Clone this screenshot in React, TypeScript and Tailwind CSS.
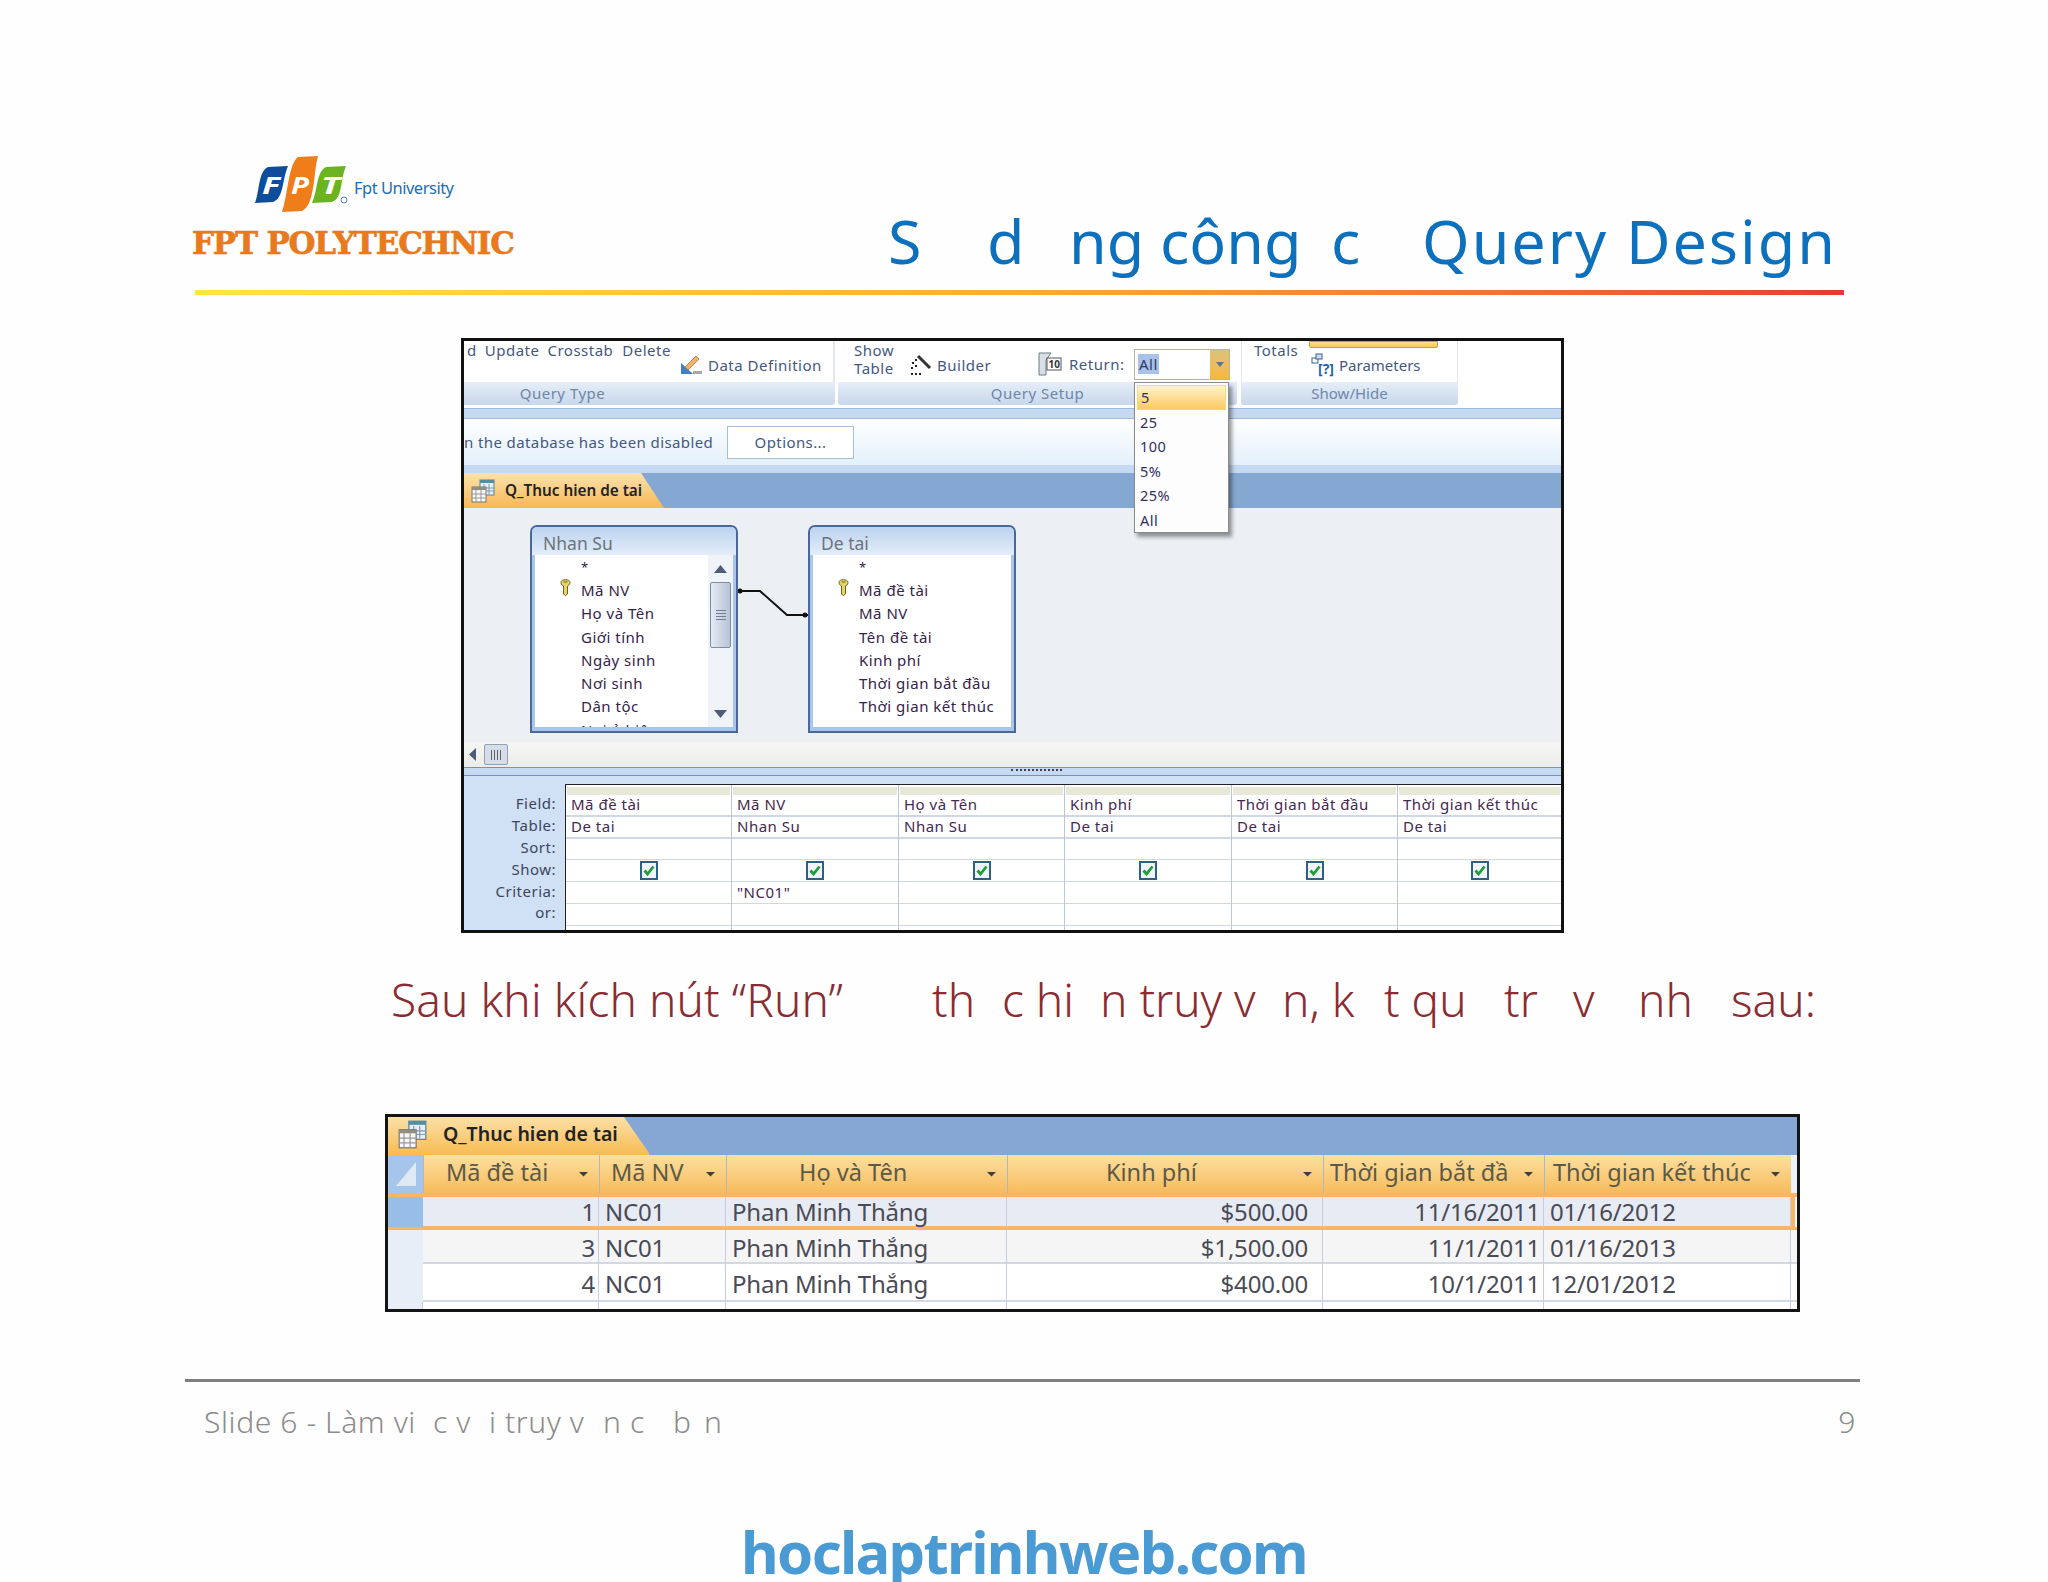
const designCols = [
  { field: "Mã đề tài", table: "De tai", criteria: "" },
  { field: "Mã NV", table: "Nhan Su", criteria: '"NC01"' },
  { field: "Họ và Tên", table: "Nhan Su", criteria: "" },
  { field: "Kinh phí", table: "De tai", criteria: "" },
  { field: "Thời gian bắt đầu", table: "De tai", criteria: "" },
  { field: "Thời gian kết thúc", table: "De tai", criteria: "" },
];

const resultHeads = [
  { label: "Mã đề tài", cls: "pl-[22px]" },
  { label: "Mã NV", cls: "pl-[11px]" },
  { label: "Họ và Tên", cls: "pl-[72px]" },
  { label: "Kinh phí", cls: "pl-[98px]" },
  { label: "Thời gian bắt đầ", cls: "pl-[6px]" },
  { label: "Thời gian kết thúc", cls: "pl-[8px]" },
];

const resultRows = [
  { id: 1, cost: "$500.00", start: "11/16/2011", end: "01/16/2012", bg: "bg-[#e7ebf3]", sel: "bg-[#97bee6]", h: "h-[37px]", lead: "leading-[30px]" },
  { id: 3, cost: "$1,500.00", start: "11/1/2011", end: "01/16/2013", bg: "bg-[#f5f5f5]", sel: "bg-[#e7eef7]", h: "h-[34px]", lead: "leading-[35px]" },
  { id: 4, cost: "$400.00", start: "10/1/2011", end: "12/01/2012", bg: "bg-white", sel: "bg-[#e7eef7]", h: "h-[38px]", lead: "leading-[39px]" },
];

const resultCols = "grid grid-cols-[35px_176px_127px_281px_316px_221px_247px_6px]";

function TabIcon({ size }: { size: number }) {
  return (
    <svg width={size} height={size} viewBox="0 0 24 24">
      <rect x="9" y="1" width="14" height="15" fill="#e8eef6" stroke="#5d7f9f" />
      <rect x="9" y="1" width="14" height="3" fill="#4f8f9f" />
      <path d="M13 5v10M18 5v10M9 9h14M9 12h14" stroke="#7f9ab5" strokeWidth="1" />
      <rect x="1" y="8" width="14" height="15" fill="#f7f7f7" stroke="#777" />
      <rect x="1" y="8" width="14" height="3" fill="#8f8f7f" />
      <path d="M5 11v12M10 11v12M1 15h14M1 19h14" stroke="#999" strokeWidth="1" />
    </svg>
  );
}

function KeyIcon() {
  return (
    <svg width="11" height="17" viewBox="0 0 11 17">
      <path d="M1 3.500C1 1.500 3 .7 5.500.7S10 1.500 10 3.500 8.500 6.500 7.500 7v8l-2 1.500L3.500 15V7C2.500 6.500 1 5.500 1 3.500Z" fill="#e4d46a" stroke="#6f6420" strokeWidth="1" />
      <path d="M3.500 3h4" stroke="#6f6420" strokeWidth="1" />
    </svg>
  );
}

function FilterArrow() {
  return (
    <svg width="11" height="6" viewBox="0 0 11 6" className="shrink-0">
      <path d="M1 1h9L5.500 5.500Z" fill="#3f3f3f" />
    </svg>
  );
}

function ShowCheck() {
  return (
    <span className="flex h-[19px] w-[18px] items-center justify-center border-2 border-[#2f5f86] bg-[#eef4f7]">
      <svg width="12" height="11" viewBox="0 0 12 11">
        <path d="M1.500 5.500 4.500 9 10.500 1.500" fill="none" stroke="#1f9d36" strokeWidth="2.800" />
      </svg>
    </span>
  );
}

function FieldList({ title, items, scroll }: { title: string; items: string[]; scroll?: boolean }) {
  return (
    <div className="flex h-[208px] w-[208px] shrink-0 flex-col overflow-hidden rounded-t-[7px] border-2 border-[#49699a] bg-[#a9c5ea]">
      <div className="flex h-[28px] shrink-0 items-center bg-gradient-to-b from-[#bcd3ef] to-[#e3edf9] pl-[11px] pt-[4px] text-[17.500px] text-[#6d737d]">
        {title}
      </div>
      <div className="mx-[3px] flex h-[172px] shrink-0 bg-white">
        <div className="min-w-0 flex-1 overflow-hidden">
          <div className="ml-[46px] h-[24px] pt-[2px] text-[13px] leading-[20px] text-[#35234a]">*</div>
          {items.map((item, i) => (
            <div key={item} className="relative h-[23.300px] whitespace-nowrap pl-[46px] text-[15px] leading-[23px] tracking-[0.5px] text-[#35234a]">
              {i === 0 && <span className="absolute left-[25px] top-0"><KeyIcon /></span>}
              {item}
            </div>
          ))}
        </div>
        {scroll && (
          <div className="flex h-full w-[25px] shrink-0 flex-col items-center bg-[#f0f3f8] pt-[10px]">
            <svg width="13" height="8" viewBox="0 0 13 8"><path d="M6.500 0 13 8H0Z" fill="#4d5d78" /></svg>
            <div className="mt-[9px] flex h-[66px] w-[21px] shrink-0 flex-col items-center justify-center gap-[2px] rounded-[2px] border border-[#7e8ca5] bg-gradient-to-r from-[#e6ebf3] to-[#b6c2d6]">
              <span className="h-px w-[10px] bg-[#6f7d95]" />
              <span className="h-px w-[10px] bg-[#6f7d95]" />
              <span className="h-px w-[10px] bg-[#6f7d95]" />
              <span className="h-px w-[10px] bg-[#6f7d95]" />
            </div>
            <svg className="mt-[62px]" width="13" height="8" viewBox="0 0 13 8"><path d="M0 0H13L6.500 8Z" fill="#4d5d78" /></svg>
          </div>
        )}
      </div>
    </div>
  );
}

function QueryWindow() {
  return (
    <div className="ml-[461px] flex h-[595px] w-[1103px] flex-col overflow-hidden border-[3px] border-[#111] bg-white text-[#44587f]">
      {/* ribbon */}
      <div className="flex h-[64px] shrink-0 gap-[3px] bg-white text-[15px] tracking-[0.5px]">
        <div className="flex w-[371px] flex-col">
          <div className="relative h-[41px] border-r-2 border-[#e1e6ee]">
            <div className="flex gap-[8px] pl-[3px] leading-[19px]">
              <span>d</span>
              <span>Update</span>
              <span>Crosstab</span>
              <span className="ml-[1px]">Delete</span>
            </div>
            <div className="absolute left-[216px] top-[13px] flex items-center gap-[5px] leading-[20px]">
              <svg width="23" height="22" viewBox="0 0 23 22">
                <path d="M1 20V9l12 11Z" fill="#3f7fc2" />
                <path d="M5 13 16 2l3 3L8 16Z" fill="#f0b36b" stroke="#b65f2a" strokeWidth=".7" />
                <path d="M13 20h9v-3h-9Z" fill="#a8a8a8" />
              </svg>
              Data Definition
            </div>
          </div>
          <div className="flex h-[23px] items-center justify-center rounded-br-[3px] bg-gradient-to-b from-[#e6eef8] to-[#c8d7eb] pr-[174px] text-[#6f86a9]">Query Type</div>
        </div>
        <div className="flex w-[399px] flex-col">
          <div className="relative flex h-[41px] pl-[16px]">
            <div className="w-[55px] shrink-0 leading-[18px]">Show<br />Table</div>
            <div className="mt-[13px] flex w-[129px] shrink-0 items-center gap-[5px] self-start leading-[20px]">
              <svg width="23" height="22" viewBox="0 0 23 22">
                <path d="M9 2 21 14" stroke="#333" strokeWidth="3" />
                <path d="M3 9h2M6 6h2M2 14h2M6 12h2M2 20h2M6 20h2M10 20h2" stroke="#222" strokeWidth="2" />
              </svg>
              <span>Builder</span>
            </div>
            <div className="mt-[11px] flex w-[96px] shrink-0 items-center gap-[6px] self-start leading-[24px]">
              <svg width="25" height="24" viewBox="0 0 25 24" className="shrink-0">
                <path d="M1 1h12L8 8v15H1Z" fill="#d8dfe6" stroke="#6d7f7f" />
                <rect x="9" y="6" width="14" height="12" fill="#fff" stroke="#555" />
                <text x="10.500" y="16" fontSize="10" fontWeight="700" fill="#333" letterSpacing="0">10</text>
              </svg>
              <span>Return:</span>
            </div>
            <div className="relative mt-[8px] flex h-[31px] w-[96px] shrink-0 self-start border border-[#b8b59a] bg-white">
              <span className="ml-[3px] mt-[4px] h-[20px] bg-[#a9c2ea] px-[1px] leading-[20px] text-[#333a5f]">All</span>
              <span className="ml-auto flex w-[19px] items-center justify-center bg-gradient-to-b from-[#d9c27a] to-[#fcb63f]">
                <svg width="8" height="5" viewBox="0 0 8 5"><path d="M0 0h8L4 5Z" fill="#56749d" /></svg>
              </span>
              <div className="absolute -left-px top-[32px] z-10 flex h-[151px] w-[95px] flex-col border border-[#8a8a8a] bg-[#fdfdfd] pb-[2px] pt-[2px] text-[14.500px] text-[#322f5e] shadow-[3px_4px_4px_rgba(0,0,0,0.4)]">
                {["5", "25", "100", "5%", "25%", "All"].map((v, i) => (
                  <div key={v} className={i === 0 ? "mx-[2px] h-[24.600px] border border-[#f0d98a] bg-gradient-to-b from-[#fff3c9] to-[#fdc95f] pl-[3px] leading-[23px]" : "h-[24.600px] pl-[5px] leading-[24.600px]"}>{v}</div>
                ))}
              </div>
            </div>
          </div>
          <div className="flex h-[23px] items-center justify-center rounded-b-[3px] bg-gradient-to-b from-[#e6eef8] to-[#c8d7eb] text-[#6f86a9]">Query Setup</div>
        </div>
        <div className="ml-px flex w-[217px] flex-col">
          <div className="relative h-[41px] border-x border-[#e1e6ee]">
            <div className="pl-[12px] leading-[18px]">Totals</div>
            <div className="absolute left-[67px] top-0 h-[7px] w-[129px] rounded-b-[2px] border border-[#c5a04b] bg-gradient-to-b from-[#ffe08a] to-[#fbc855]" />
            <div className="absolute left-[69px] top-[12px] flex items-center gap-[5px] leading-[20px] tracking-normal">
              <svg width="23" height="24" viewBox="0 0 23 24">
                <rect x="1" y="5" width="6" height="5" fill="#fff" stroke="#39618f" />
                <rect x="5" y="1" width="6" height="5" fill="#cfdff0" stroke="#39618f" />
                <text x="7" y="21" fontSize="14" fontWeight="700" fill="#1f63a8">[?]</text>
              </svg>
              <span>Parameters</span>
            </div>
          </div>
          <div className="flex h-[23px] items-center justify-center rounded-b-[3px] bg-gradient-to-b from-[#e6eef8] to-[#c8d7eb] tracking-normal text-[#6f86a9]">Show/Hide</div>
        </div>
      </div>

      <div className="h-[3px] shrink-0 bg-white" />
      <div className="h-[11px] shrink-0 border-y border-[#9dbbe0] bg-[#c6d9f2]" />

      {/* message bar */}
      <div className="flex h-[46px] shrink-0 items-center bg-gradient-to-b from-white to-[#e3f0fb] pt-[1px] text-[15px] tracking-[0.4px]">
        <span className="w-[263px] shrink-0 whitespace-nowrap">n the database has been disabled</span>
        <span className="flex h-[33px] w-[127px] items-center justify-center border border-[#a9bdd8] bg-white">Options...</span>
      </div>
      <div className="h-[8px] shrink-0 bg-[#c6d9f2]" />

      {/* query tab */}
      <div className="h-[35px] shrink-0 bg-[#85a8d3]">
        <div className="flex h-[35px] w-[200px] items-center gap-[10px] bg-gradient-to-b from-[#fbe2ad] to-[#f8b84f] pl-[7px] text-[15.300px] font-semibold text-[#222] [clip-path:polygon(0_0,177px_0,200px_100%,0_100%)]">
          <TabIcon size={24} />
          <span className="whitespace-nowrap">Q_Thuc hien de tai</span>
        </div>
      </div>

      {/* design surface */}
      <div className="flex h-[234px] shrink-0 items-start bg-[#ecf0f5] pl-[66px] pt-[17px]">
        <FieldList title="Nhan Su" items={["Mã NV", "Họ và Tên", "Giới tính", "Ngày sinh", "Nơi sinh", "Dân tộc", "Nơi ở hiện"]} scroll />
        <svg width="70" height="208" viewBox="0 0 70 208" className="shrink-0">
          <path d="M1 66H22L49 90H70" fill="none" stroke="#111" strokeWidth="2" />
          <circle cx="2" cy="66" r="2.500" fill="#111" />
          <circle cx="67" cy="90" r="2.500" fill="#111" />
        </svg>
        <FieldList title="De tai" items={["Mã đề tài", "Mã NV", "Tên đề tài", "Kinh phí", "Thời gian bắt đầu", "Thời gian kết thúc"]} />
      </div>

      {/* horizontal scroll */}
      <div className="flex h-[25px] shrink-0 items-center gap-[8px] bg-gradient-to-b from-[#f6f6f4] to-[#ececea] pl-[5px]">
        <svg width="7" height="13" viewBox="0 0 7 13"><path d="M7 0v13L0 6.500Z" fill="#4d5d78" /></svg>
        <span className="flex h-[21px] w-[24px] items-center justify-center gap-[2px] rounded-[2px] border border-[#93a0b5] bg-[#d5dde8]">
          <i className="h-[10px] w-px bg-[#666]" /><i className="h-[10px] w-px bg-[#666]" /><i className="h-[10px] w-px bg-[#666]" /><i className="h-[10px] w-px bg-[#666]" />
        </span>
      </div>

      {/* splitter */}
      <div className="flex h-[9px] shrink-0 items-start justify-center border-y border-[#6f93c4] bg-[#c6d9f2] pl-[48px] pt-[1px]">
        <span className="h-[2px] w-[51px] border-t-2 border-dotted border-[#444]" />
      </div>

      {/* design grid */}
      <div className="grid h-[154px] shrink-0 grid-cols-[101px_1fr] bg-[#d0e1f5] pt-[8px] text-[15px] tracking-[0.5px]">
        <div className="flex flex-col pr-[9px] pt-[9px] text-right text-[#3c4560]">
          {["Field:", "Table:", "Sort:", "Show:", "Criteria:", "or:"].map((l) => (
            <div key={l} className="h-[21.900px] leading-[21.900px]">{l}</div>
          ))}
        </div>
        <div className="grid grid-cols-[166px_167px_166px_167px_166px_164px] border-l border-t border-[#222] bg-white">
          {designCols.map((c) => (
            <div key={c.field} className="flex min-w-0 flex-col border-r border-[#bac7da] text-[#44284f]">
              <div className="mx-[1px] mt-[2px] h-[8px] shrink-0 bg-[#e8e8d8]" />
              <div className="h-[22px] shrink-0 whitespace-nowrap border-b-2 border-[#cfd8e6] pl-[5px] leading-[18px]">{c.field}</div>
              <div className="h-[22px] shrink-0 border-b-2 border-[#cfd8e6] pl-[5px] leading-[18px]">{c.table}</div>
              <div className="h-[21px] shrink-0 border-b border-[#cfd8e6]" />
              <div className="flex h-[22px] shrink-0 items-center justify-center border-b border-[#cfd8e6]"><ShowCheck /></div>
              <div className="h-[22px] shrink-0 border-b border-[#cfd8e6] pl-[5px] leading-[20px]">{c.criteria}</div>
              <div className="h-[22px] shrink-0 border-b border-[#cfd8e6]" />
            </div>
          ))}
        </div>
      </div>
    </div>
  );
}

function ResultTable() {
  return (
    <div className="ml-[385px] flex h-[198px] w-[1415px] flex-col overflow-hidden border-[3px] border-[#141414] bg-white text-[24px] tracking-[-0.2px] text-[#4a4a55]">
      <div className="h-[38px] shrink-0 bg-[#86a7d3]">
        <div className="flex h-[36px] w-[261px] items-center gap-[16px] bg-gradient-to-b from-[#fbe0a6] to-[#f8bd55] pb-[2px] pl-[10px] text-[19.500px] font-semibold tracking-normal text-[#222] [clip-path:polygon(0_0,236px_0,261px_100%,0_100%)]">
          <TabIcon size={29} />
          <span className="whitespace-nowrap">Q_Thuc hien de tai</span>
        </div>
        <div className="h-[2px] w-[261px] bg-[#f8bd55]" />
      </div>
      <div className={`${resultCols} h-[38px] shrink-0 bg-gradient-to-b from-[#fde09f] to-[#f6bb5b]`}>
        <div className="flex items-center justify-center bg-[#a5c6ea]">
          <svg width="22" height="26" viewBox="0 0 22 26"><path d="M21 1v24H1Z" fill="#dfe9f4" /></svg>
        </div>
        {resultHeads.map((h) => (
          <div key={h.label} className={`relative flex items-center whitespace-nowrap border-l border-[#a9b9ca] pb-[2px] text-[23.500px] tracking-normal text-[#5c5a45] ${h.cls}`}>
            {h.label}
            <span className="absolute right-[10px] top-[16px]"><FilterArrow /></span>
          </div>
        ))}
        <div className="bg-[#eef2f8]" />
      </div>
      {resultRows.map((r, i) => (
        <div key={r.id} className={`${resultCols} ${r.h} ${r.lead} shrink-0 ${r.bg} ${i === 0 ? "border-y-[4px] border-[#f8b469]" : "border-b-2 border-[#d3d9e4]"}`}>
          <div className={r.sel} />
          <div className="border-r border-[#c3cfe0] pr-[3px] text-right">{r.id}</div>
          <div className="border-r border-[#c3cfe0] pl-[6px]">NC01</div>
          <div className="whitespace-nowrap border-r border-[#c3cfe0] pl-[6px]">Phan Minh Thắng</div>
          <div className="border-r border-[#c3cfe0] pr-[14px] text-right">{r.cost}</div>
          <div className="border-r border-[#c3cfe0] pr-[3px] text-right">{r.start}</div>
          <div className="border-r border-[#c3cfe0] pl-[6px]">{r.end}</div>
          <div className={i === 0 ? "border-l-[4px] border-[#f8b469] bg-white" : ""} />
        </div>
      ))}
      <div className={`${resultCols} h-[7px] shrink-0`}>
        {[0, 1, 2, 3, 4, 5, 6].map((n) => (
          <div key={n} className={n === 0 ? "border-r border-[#c3cfe0] bg-[#e7eef7]" : "border-r border-[#c3cfe0]"} />
        ))}
      </div>
    </div>
  );
}

export default function App() {
  return (
    <div className="h-[1582px] w-[2048px] overflow-hidden bg-[#fefefe] font-['Noto_Sans',sans-serif]">
      <header className="flex h-[290px] pl-[192px]">
        <div className="w-[696px] pt-[154px]">
          <div className="ml-[58px] flex h-[60px] items-start gap-[4px]">
            <svg width="100" height="60" viewBox="250 154 100 60">
              <path d="M255 203C260 190 258 172 268 167L288 166C282 180 284 198 273 202Z" fill="#0f4c9c" />
              <path d="M282 212C288 195 288 165 298 157L318 156C313 175 315 205 302 211Z" fill="#ef7d1a" />
              <path d="M312 203C318 190 316 172 326 167L346 166C340 180 343 198 332 202Z" fill="#6cb41f" />
              <text x="262" y="194" fontSize="24" fontWeight="700" fontStyle="italic" fill="#fff" textLength="18" lengthAdjust="spacingAndGlyphs">F</text>
              <text x="291" y="194" fontSize="24" fontWeight="700" fontStyle="italic" fill="#fff" textLength="18" lengthAdjust="spacingAndGlyphs">P</text>
              <text x="321" y="194" fontSize="24" fontWeight="700" fontStyle="italic" fill="#fff" textLength="19" lengthAdjust="spacingAndGlyphs">T</text>
              <circle cx="344" cy="200" r="3" fill="none" stroke="#2a6db5" strokeWidth=".8" />
            </svg>
            <span className="mt-[22px] whitespace-nowrap text-[16.500px] leading-[24px] tracking-[-0.5px] text-[#1f6db5]">Fpt University</span>
          </div>
          <div className="mt-[11px] whitespace-nowrap font-['DejaVu_Serif',serif] text-[31px] font-bold leading-[36px] tracking-[-1.2px] text-[#e87a1d] [-webkit-text-stroke:0.6px_#e87a1d]">FPT POLYTECHNIC</div>
        </div>
        <h1 className="flex whitespace-pre pt-[210px] text-[61px] font-normal leading-[61px] text-[#0c70bd]">
          <span className="w-[99px]">S</span>
          <span className="w-[82px]">d</span>
          <span className="w-[262px]">ng công</span>
          <span className="w-[91px]">c</span>
          <span className="tracking-[2px]">Query Design</span>
        </h1>
      </header>
      <div className="ml-[195px] h-[5px] w-[1649px] bg-gradient-to-r from-[#ffe83a] via-[#f9ae2b] to-[#e9363b]" />

      <div className="pt-[43px]">
        <QueryWindow />
      </div>

      <p className="flex h-[181px] whitespace-pre pl-[391px] pt-[43px] text-[46px] font-[350] leading-[46px] text-[#8a2c32]">
        <span className="w-[541px] tracking-[0.1px]">Sau khi kích nút “Run”</span>
        <span className="w-[70px]">th</span>
        <span className="w-[98px]">c hi</span>
        <span className="w-[182px]">n truy v</span>
        <span className="w-[102px]">n, k</span>
        <span className="w-[120px]">t qu</span>
        <span className="w-[69px]">tr</span>
        <span className="w-[65px]">v</span>
        <span className="w-[93px]">nh</span>
        <span>sau:</span>
      </p>

      <ResultTable />

      <footer className="ml-[185px] mt-[67px] w-[1675px] border-t-[3px] border-[#7f7f7f]">
        <div className="flex whitespace-pre pl-[19px] pr-[4px] pt-[25px] text-[30px] font-light leading-[30px] tracking-[0.6px] text-[#8c8c8c]">
          <span className="w-[229px]">Slide 6 - Làm vi</span>
          <span className="w-[56px]">c v</span>
          <span className="w-[114px]">i truy v</span>
          <span className="w-[70px]">n c</span>
          <span className="w-[31px]">b</span>
          <span>n</span>
          <span className="ml-auto">9</span>
        </div>
      </footer>

      <div className="mt-[86px] text-center text-[58px] font-bold leading-[58px] tracking-[-1.700px] text-[#4a9bd4]">hoclaptrinhweb.com</div>
    </div>
  );
}
